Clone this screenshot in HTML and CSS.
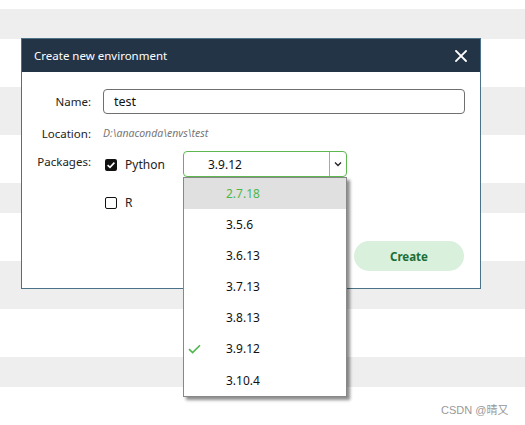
FILE: index.html
```html
<!DOCTYPE html>
<html>
<head>
<meta charset="utf-8">
<link rel="stylesheet" href="styles.css">
</head>
<body>
<div class="stripes">
  <div class="row w9"></div>
  <div class="row g30"></div>
  <div class="row w48"></div>
  <div class="row g48"></div>
  <div class="row w48"></div>
  <div class="row g30"></div>
  <div class="row w48"></div>
  <div class="row g48"></div>
  <div class="row w48"></div>
  <div class="row g30"></div>
</div>

<div class="dialog">
  <div class="dlg-head">
    <span class="dlg-title">Create new environment</span>
    <svg class="close" width="12" height="12" viewBox="0 0 12 12"><path d="M1 1L11 11M11 1L1 11" stroke="#fff" stroke-width="1.8" stroke-linecap="square"/></svg>
  </div>
  <div class="dlg-body">
    <div class="field name-row">
      <label class="lbl">Name:</label>
      <div class="input">test</div>
    </div>
    <div class="field loc-row">
      <label class="lbl">Location:</label>
      <span class="loc">D:\anaconda\envs\test</span>
    </div>
    <div class="field pkg-row">
      <label class="lbl">Packages:</label>
      <div class="pkg-opts">
        <div class="pkg-line">
          <span class="cb checked"><svg width="12" height="12" viewBox="0 0 12 12"><path d="M2.6 6.2L5 8.4L9.4 3.6" stroke="#fff" stroke-width="1.6" fill="none"/></svg></span>
          <span class="pkg-name">Python</span>
          <div class="select">
            <span class="sel-val">3.9.12</span>
            <span class="sel-btn"><svg width="8" height="6" viewBox="0 0 8 6"><path d="M1 1.5L4 4.5L7 1.5" stroke="#222" stroke-width="1.3" fill="none"/></svg></span>
          </div>
        </div>
        <div class="pkg-line r-line">
          <span class="cb"></span>
          <span class="pkg-name">R</span>
        </div>
      </div>
    </div>
    <div class="actions">
      <button class="create">Create</button>
    </div>
  </div>
</div>

<ul class="dropdown">
  <li class="item hover">2.7.18</li>
  <li class="item">3.5.6</li>
  <li class="item">3.6.13</li>
  <li class="item">3.7.13</li>
  <li class="item">3.8.13</li>
  <li class="item sel"><svg class="tick" width="13" height="10" viewBox="0 0 13 10"><path d="M1 5.2L4.6 8.6L12 1.2" stroke="#4cb84a" stroke-width="1.6" fill="none"/></svg>3.9.12</li>
  <li class="item">3.10.4</li>
</ul>

<div class="watermark">CSDN @晴又</div>
</body>
</html>
```

FILE: styles.css
```css
* { box-sizing: border-box; }
html, body {
  margin: 0;
  padding: 0;
  width: 525px;
  height: 425px;
  overflow: hidden;
  background: #fff;
  font-family: "Noto Sans", "Open Sans", "Noto Sans CJK SC", sans-serif;
  color: #222;
}
.stripes { display: flex; flex-direction: column; }
.row { width: 100%; }
.w9 { height: 9px; }
.w48 { height: 48px; }
.g30 { height: 30px; background: #eeeeee; }
.g48 { height: 48px; background: #eeeeee; }

.dialog {
  position: absolute;
  left: 21px;
  top: 38px;
  width: 460px;
  height: 251px;
  background: #fff;
  border: 1px solid #4b7286;
  display: flex;
  flex-direction: column;
}
.dlg-head {
  height: 33px;
  background: #243447;
  display: flex;
  align-items: center;
  justify-content: space-between;
  padding: 0 13px 0 12px;
}
.dlg-title {
  color: #fff;
  font-size: 11.5px;
}
.close { display: block; }

.dlg-body {
  display: flex;
  flex-direction: column;
  padding: 17px 15px 0 12px;
}
.field {
  display: grid;
  grid-template-columns: 57px 1fr;
  column-gap: 12px;
  align-items: center;
}
.lbl {
  font-size: 11.5px;
  text-align: right;
  color: #222;
}
.input {
  height: 25px;
  border: 1px solid #6f6f6f;
  border-radius: 4px;
  font-size: 12.5px;
  padding-left: 10px;
  display: flex;
  align-items: center;
  color: #111;
}
.loc-row { margin-top: 8px; height: 22px; }
.loc {
  font-size: 10.5px;
  font-style: italic;
  color: #777;
}
.pkg-row { margin-top: 7px; align-items: start; }
.pkg-row .lbl { padding-top: 3px; }
.pkg-opts { display: flex; flex-direction: column; margin-left: 2px; }
.pkg-line {
  display: flex;
  align-items: center;
  height: 26px;
}
.r-line { margin-top: 12px; }
.cb {
  width: 12px;
  height: 12px;
  border: 1.5px solid #111;
  border-radius: 2px;
  display: flex;
  align-items: center;
  justify-content: center;
  margin-top: 2px;
}
.cb.checked { background: #111; border: none; }
.pkg-name {
  font-size: 12px;
  margin-left: 8px;
  width: 58px;
}
.select {
  width: 164px;
  height: 26px;
  border: 1px solid #5db84f;
  border-radius: 4px;
  display: flex;
  align-items: center;
}
.sel-val {
  flex: 1;
  font-size: 12px;
  padding-left: 24px;
  color: #111;
}
.sel-btn {
  width: 17px;
  height: 100%;
  border-left: 1px solid #a8a8a8;
  display: flex;
  align-items: center;
  justify-content: center;
}
.actions {
  display: flex;
  justify-content: flex-end;
  margin-top: 26px;
  padding-right: 1px;
}
.create {
  width: 110px;
  height: 30px;
  border: none;
  border-radius: 15px;
  background: #d9f0dd;
  color: #1b6e35;
  font-family: "Noto Sans", sans-serif;
  font-weight: bold;
  font-size: 11.5px;
}

.dropdown {
  position: absolute;
  left: 183px;
  top: 177px;
  width: 164px;
  margin: 0;
  padding: 0;
  list-style: none;
  background: #fff;
  border: 1px solid #888;
  box-shadow: 3px 3px 3px rgba(0,0,0,0.45);
}
.item {
  height: 31px;
  display: flex;
  align-items: center;
  padding-left: 42px;
  font-size: 12px;
  color: #111;
  position: relative;
}
.item.hover { background: #e0e0e0; color: #4cb84a; }
.item:last-child { height: 32px; }
.tick { position: absolute; left: 4px; top: 11px; }

.watermark {
  position: absolute;
  left: 441px;
  top: 401px;
  font-size: 11px;
  color: #999;
  font-family: "Liberation Sans", "Noto Sans CJK SC", sans-serif;
}
```
